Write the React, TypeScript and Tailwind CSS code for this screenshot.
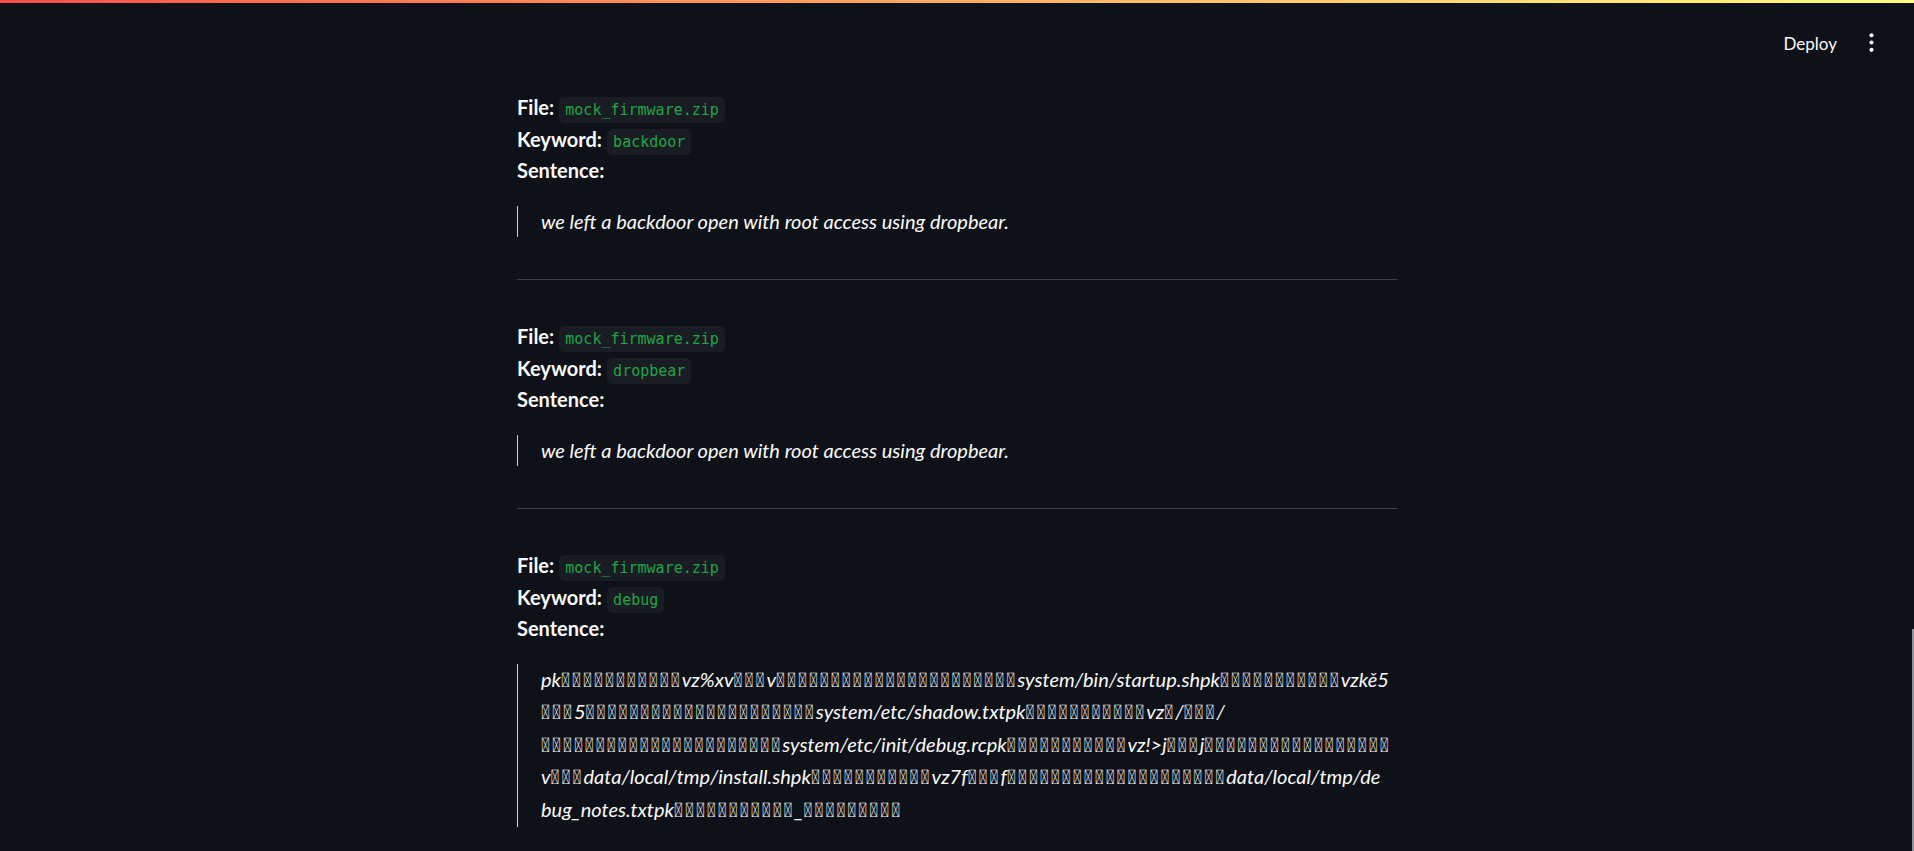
import React from "react"

// unprintable bytes from the firmware dump, shown as tofu
const B = "\uE000"

function Code({ children }: { children: React.ReactNode }) {
  return (
    <code className="font-['DejaVu_Sans_Mono',monospace] text-[15px] leading-[17px] text-[#1fa645] bg-[#1a1c24] rounded-[5px] px-[6px] py-[4px]">
      {children}
    </code>
  )
}

function Garbled({ text }: { text: string }) {
  const parts = text.split(/(\uE000+)/)
  return (
    <span className="block whitespace-nowrap">
      {parts.map((p, i) =>
        p.startsWith(B) ? (
          <span key={i} className="font-['Roboto',sans-serif] tracking-[2px]">{p}</span>
        ) : (
          <span key={i}>{p}</span>
        )
      )}
    </span>
  )
}

function Entry({ keyword, children }: { keyword: string; children: React.ReactNode }) {
  return (
    <div className="text-[20px] leading-[31.5px]">
      <p>
        <strong className="font-bold">File:</strong> <Code>mock_firmware.zip</Code>
      </p>
      <p>
        <strong className="font-bold">Keyword:</strong> <Code>{keyword}</Code>
      </p>
      <p className="font-bold">Sentence:</p>
      <blockquote className="mt-[19px] border-l border-[#d0d1d3] pl-[23px] leading-[31.6px] italic">
        {children}
      </blockquote>
    </div>
  )
}

function Divider() {
  return <div className="mt-[42px] mb-[41px] h-px bg-[#3d4047]" />
}

export default function App() {
  const lines = [
    "pk" + B.repeat(11) + "vz%xv" + B.repeat(3) + "v" + B.repeat(22) + "system/bin/startup.shpk" + B.repeat(11) + "vzkě5",
    B.repeat(3) + "5" + B.repeat(21) + "system/etc/shadow.txtpk" + B.repeat(11) + "vz" + B + "/" + B.repeat(3) + "/",
    B.repeat(22) + "system/etc/init/debug.rcpk" + B.repeat(11) + "vz!>j" + B.repeat(3) + "j" + B.repeat(17),
    "v" + B.repeat(3) + "data/local/tmp/install.shpk" + B.repeat(11) + "vz7f" + B.repeat(3) + "f" + B.repeat(20) + "data/local/tmp/de",
    "bug_notes.txtpk" + B.repeat(11) + "_" + B.repeat(9),
  ]

  return (
    <div className="relative min-h-screen bg-[#0e1117] text-[#fafafa] font-['Lato',sans-serif]">
      <div className="h-[3px] bg-linear-to-r from-[#ff4b4b] to-[#fffd80]" />

      {/* header */}
      <header className="h-[89px] flex items-start justify-end pt-[29px] pr-[30px]">
        <button className="text-[17px] leading-[24px] text-[#fafafa] mr-[22px]">Deploy</button>
        <svg width="25" height="25" viewBox="0 0 24 24" fill="#fafafa" className="mt-[-2px]">
          <circle cx="12" cy="5" r="2" />
          <circle cx="12" cy="12" r="2" />
          <circle cx="12" cy="19" r="2" />
        </svg>
      </header>

      <main className="mx-auto w-[880px]">
        <Entry keyword="backdoor">we left a backdoor open with root access using dropbear.</Entry>
        <Divider />
        <Entry keyword="dropbear">we left a backdoor open with root access using dropbear.</Entry>
        <Divider />
        <Entry keyword="debug">
          {lines.map((l, i) => (
            <Garbled key={i} text={l} />
          ))}
        </Entry>
      </main>

      {/* scrollbar thumb */}
      <div className="absolute right-0 top-[629px] bottom-0 w-[2px] bg-[#8e9094]" />
    </div>
  )
}
